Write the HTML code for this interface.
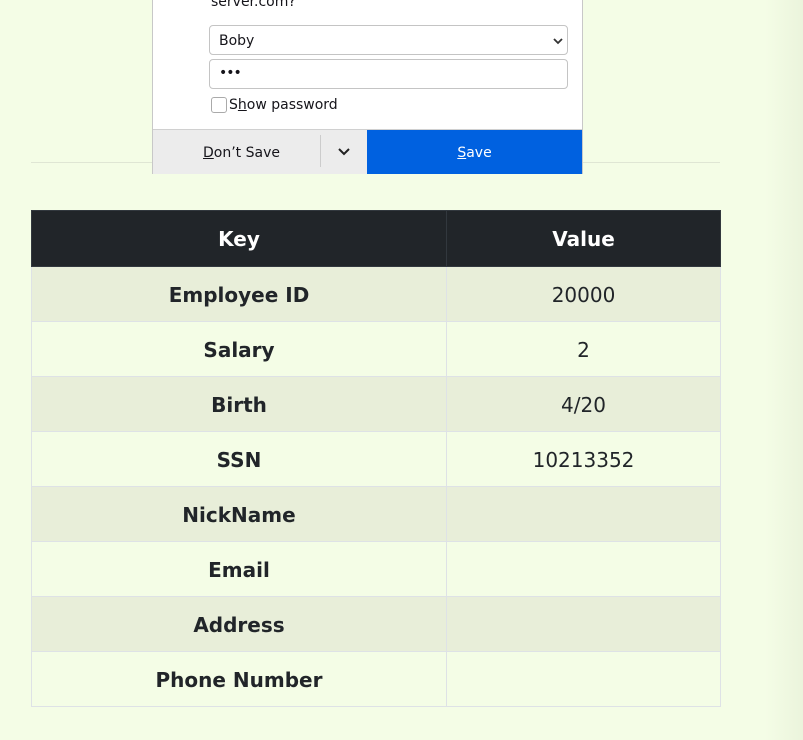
<!DOCTYPE html>
<html><head><style>
body{margin:0;width:803px;height:740px;overflow:hidden;background:linear-gradient(to right,#f4fde6 0,#f4fde6 765px,#ebf4dc 803px);font-family:"DejaVu Sans","Liberation Sans",sans-serif;position:relative}
.hr{position:absolute;left:31px;top:162px;width:689px;height:1px;background:#dfe6d4}
table{position:absolute;left:31px;top:210px;width:690px;border-collapse:collapse;font-size:20px;color:#212529}
td,th{border:1px solid #dee2e6;text-align:center;height:55px;padding:1px 0 0 0;box-sizing:border-box}
th{background:#212529;color:#fff;border-color:#32383e;height:56px;padding:0}
td:first-child,th:first-child{width:415px}
td:first-child{font-weight:bold}
tr.o td{background:#e8eed9}
tr.e td{background:#f4fde6}
.pop{position:absolute;left:152px;top:-2px;width:429px;height:174px;background:#fff;border:1px solid #c8c8c8;font-family:"DejaVu Sans","Liberation Sans",sans-serif;font-size:14px;color:#15141a}
.f{position:absolute;left:56px;width:359px;height:30px;border:1px solid #c4c4c4;border-radius:4px;box-sizing:border-box}
.bot{position:absolute;left:0;top:130px;width:429px;height:44px;border-top:1px solid #d0d0d0}
u{text-decoration:underline}
</style></head><body>
<div class="hr"></div>
<div class="pop">
<div style="position:absolute;left:58px;top:-5px">server.com?</div>
<div class="f" style="top:26px"><span style="position:absolute;left:9px;top:7px">Boby</span>
<svg style="position:absolute;right:4px;top:12px" width="10" height="7" viewBox="0 0 10 7"><path d="M1 1l4 4 4-4" stroke="#333" stroke-width="1.8" fill="none"/></svg></div>
<div class="f" style="top:60px"><span style="position:absolute;left:9px;top:5px;font-size:14px;letter-spacing:-1px">•••</span></div>
<div style="position:absolute;left:58px;top:98px;width:14px;height:14px;border:1px solid #aaa;border-radius:3px"></div>
<div style="position:absolute;left:76px;top:98px">S<u>h</u>ow password</div>
<div class="bot">
<div style="position:absolute;left:0;top:0;width:214px;height:44px;background:#ececec"></div>
<div style="position:absolute;left:167px;top:5px;width:1px;height:32px;background:#ccc"></div>
<div style="position:absolute;left:50px;top:15px"><u>D</u>on’t Save</div>
<svg style="position:absolute;left:184px;top:17px" width="14" height="9" viewBox="0 0 14 9"><path d="M2 2l5 5 5-5" stroke="#222" stroke-width="2" fill="none"/></svg>
<div style="position:absolute;left:214px;top:0;width:215px;height:44px;background:#0061e0;color:#fff;text-align:center;line-height:46px"><u>S</u>ave</div>
</div>
</div>
<table>
<tr><th>Key</th><th>Value</th></tr>
<tr class="o"><td>Employee ID</td><td>20000</td></tr>
<tr class="e"><td>Salary</td><td>2</td></tr>
<tr class="o"><td>Birth</td><td>4/20</td></tr>
<tr class="e"><td>SSN</td><td>10213352</td></tr>
<tr class="o"><td>NickName</td><td></td></tr>
<tr class="e"><td>Email</td><td></td></tr>
<tr class="o"><td>Address</td><td></td></tr>
<tr class="e"><td>Phone Number</td><td></td></tr>
</table>
</body></html>
